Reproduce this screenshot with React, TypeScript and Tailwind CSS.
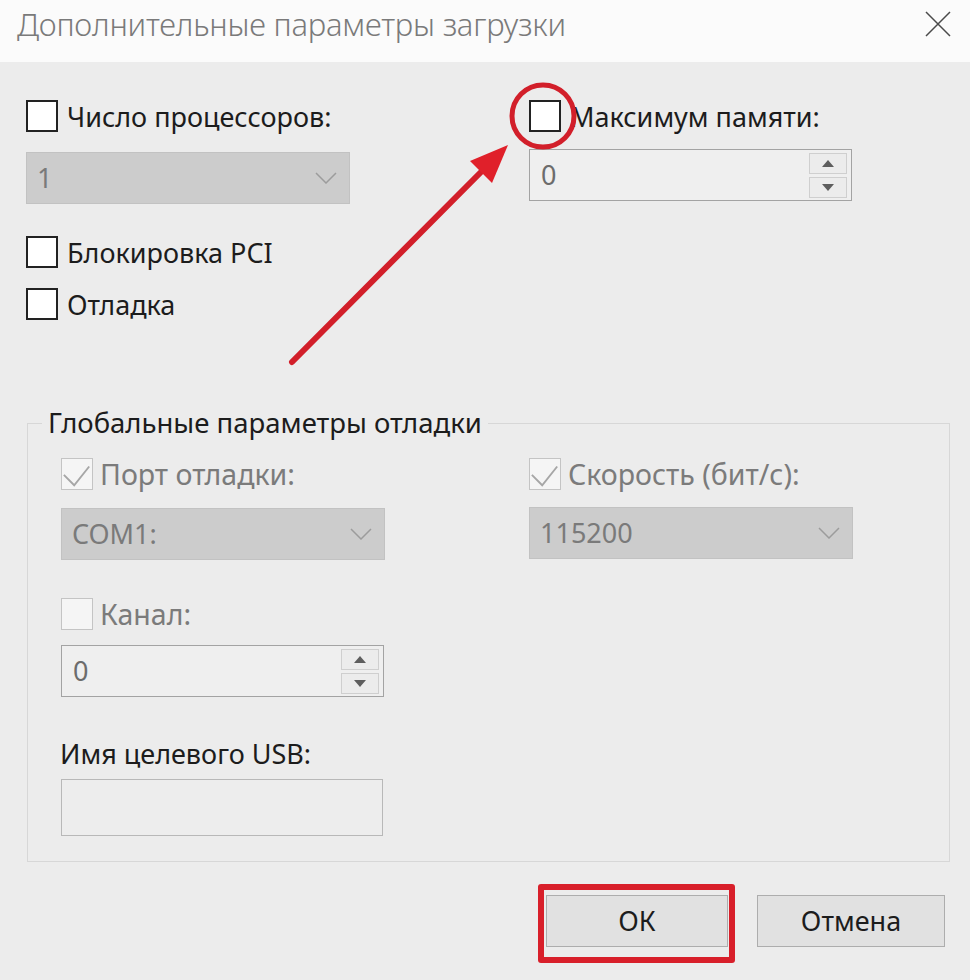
import React from 'react';

const font = { fontFamily: '"Noto Sans", "Open Sans", sans-serif' };

const Box: React.FC<{ checked?: boolean; disabled?: boolean }> = ({ checked, disabled }) => (
    <span
        className={`w-[32px] h-[32px] shrink-0 flex items-center justify-center ${
            disabled ? 'border-[1.5px] border-[#c4c4c4] bg-[#f5f5f5]' : 'border-2 border-[#222222] bg-white'
        }`}
    >
        {checked && (
            <svg viewBox="0 0 32 32" className="w-[32px] h-[32px]">
                <path d="M2 17 L13 28 L29 8" fill="none" stroke="#a6a6a6" strokeWidth="2" />
            </svg>
        )}
    </span>
);

const CheckRow: React.FC<{ label: string; checked?: boolean; disabled?: boolean; className?: string }> = ({
    label,
    checked,
    disabled,
    className = '',
}) => (
    <div className={`flex items-center h-[32px] ${disabled ? 'gap-[7px]' : 'gap-[9px]'} ${className}`}>
        <Box checked={checked} disabled={disabled} />
        <span
            className={`leading-none whitespace-nowrap ${
                disabled ? 'text-[28.5px] text-[#7b7b7b]' : 'text-[27px] text-[#1c1c1c]'
            }`}
        >
            {label}
        </span>
    </div>
);

const Combo: React.FC<{ value: string; className?: string }> = ({ value, className = '' }) => (
    <div
        className={`w-[324px] h-[52px] bg-[#cccccc] border border-[#c2c2c2] flex items-center justify-between pl-[10px] pr-[12px] ${className}`}
    >
        <span className="text-[27px] text-[#7a7a7a]">{value}</span>
        <svg width="22" height="12" viewBox="0 0 22 12">
            <path d="M1 1 L11 11 L21 1" fill="none" stroke="#9c9c9c" strokeWidth="1.5" />
        </svg>
    </div>
);

const Spin: React.FC<{ value: string; className?: string }> = ({ value, className = '' }) => (
    <div
        className={`w-[323px] h-[52px] bg-[#efefef] border border-[#a3a3a3] flex items-center justify-between pl-[11px] pr-[4px] ${className}`}
    >
        <span className="text-[27px] text-[#6c6c6c]">{value}</span>
        <div className="flex flex-col gap-[3px]">
            <span className="w-[38px] h-[21px] border border-[#cfcfcf] bg-[#ececec] flex items-center justify-center">
                <svg width="12" height="7" viewBox="0 0 12 7">
                    <path d="M0 7 L6 0 L12 7 Z" fill="#5e5e5e" />
                </svg>
            </span>
            <span className="w-[38px] h-[21px] border border-[#cfcfcf] bg-[#ececec] flex items-center justify-center">
                <svg width="12" height="7" viewBox="0 0 12 7">
                    <path d="M0 0 L12 0 L6 7 Z" fill="#5e5e5e" />
                </svg>
            </span>
        </div>
    </div>
);

const Button: React.FC<{ label: string; width: string }> = ({ label, width }) => (
    <button
        className={`${width} h-[52px] bg-[#e1e1e1] border border-[#adadad] text-[27px] text-[#1c1c1c] flex items-center justify-center`}
    >
        {label}
    </button>
);

export default function App() {
    return (
        <div className="relative w-[970px] h-[980px] bg-[#ececec] overflow-hidden" style={font}>
            <div className="h-[62px] bg-[#fbfbfb] flex items-start justify-between pl-[17px] pr-[19px] pt-[4px]">
                <span className="text-[31px] leading-[40px] font-light text-[#7a7a7a] tracking-[-0.2px]">
                    Дополнительные параметры загрузки
                </span>
                <svg className="mt-[7px]" width="26" height="26" viewBox="0 0 26 26">
                    <path d="M1 1 L25 25 M25 1 L1 25" stroke="#4a4a4a" strokeWidth="1.5" />
                </svg>
            </div>

            <div className="pl-[26px] pt-[38px]">
                <div className="flex">
                    <div className="w-[503px] flex flex-col">
                        <CheckRow label="Число процессоров:" />
                        <Combo className="mt-[20px]" value="1" />
                        <CheckRow className="mt-[32px]" label="Блокировка PCI" />
                        <CheckRow className="mt-[20px]" label="Отладка" />
                    </div>
                    <div className="flex flex-col">
                        <CheckRow label="Максимум памяти:" />
                        <Spin className="mt-[17px]" value="0" />
                    </div>
                </div>

                <fieldset className="mt-[86px] ml-[1px] w-[923px] h-[456px] border border-[#d7d7d7] pl-[33px] pt-[18px]">
                    <legend className="-ml-[19px] px-[6px] text-[27.5px] leading-[34px] text-[#1c1c1c]">
                        Глобальные параметры отладки
                    </legend>
                    <div className="flex">
                        <div className="w-[468px] flex flex-col">
                            <CheckRow label="Порт отладки:" checked disabled />
                            <Combo className="mt-[18px]" value="COM1:" />
                            <CheckRow className="mt-[38px]" label="Канал:" disabled />
                            <Spin className="mt-[15px]" value="0" />
                            <span className="mt-[40px] text-[27px] leading-[34px] text-[#1c1c1c] -ml-[1px]">
                                Имя целевого USB:
                            </span>
                            <div className="mt-[8px] w-[322px] h-[57px] border border-[#b8b8b8] bg-[#ededed]" />
                        </div>
                        <div className="flex flex-col">
                            <CheckRow label="Скорость (бит/с):" checked disabled />
                            <Combo className="mt-[17px] w-[323px]" value="115200" />
                        </div>
                    </div>
                </fieldset>

                <div className="mt-[33px] flex justify-end gap-[29px] pr-[25px]">
                    <Button label="ОК" width="w-[182px]" />
                    <Button label="Отмена" width="w-[188px]" />
                </div>
            </div>

            {/* red annotations over the dialog */}
            <div className="absolute left-[538px] top-[884px] w-[197px] h-[79px] border-[6px] border-[#d81f2a] rounded-[3px] pointer-events-none" />
            <svg className="absolute left-0 top-0 pointer-events-none" width="970" height="980" viewBox="0 0 970 980">
                <circle cx="543" cy="116" r="31" fill="none" stroke="#d21f2a" strokeWidth="5" />
                <line x1="292" y1="362" x2="484" y2="169" stroke="#d21f2a" strokeWidth="6" strokeLinecap="round" />
                <polygon points="508,145 470,161 492,183" fill="#e0202a" />
            </svg>
        </div>
    );
}
